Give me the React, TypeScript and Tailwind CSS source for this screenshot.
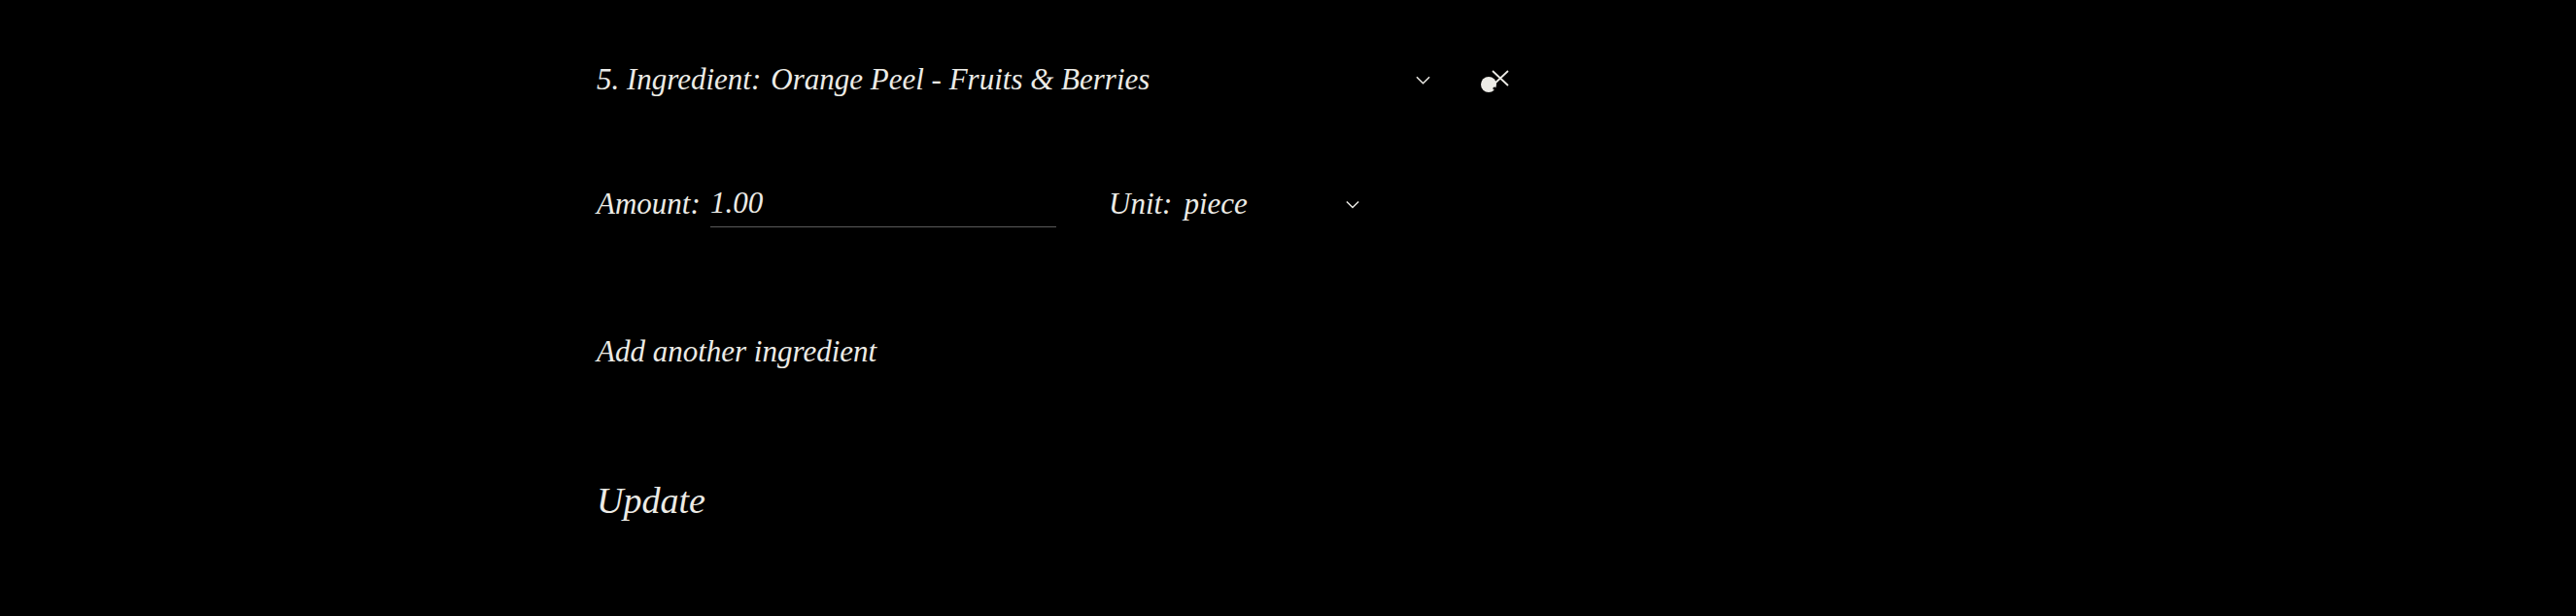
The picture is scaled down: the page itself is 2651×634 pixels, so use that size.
import React, { useState } from 'react';

const Chevron = ({ className }: { className?: string }) => (
  <svg className={className} viewBox="0 0 16 9" fill="none" stroke="currentColor" strokeWidth={1.6}>
    <polyline points="1,1 8,8 15,1" />
  </svg>
);

const RemoveIcon = () => (
  <svg className="h-[24px] w-[32px]" viewBox="0 0 32 24" fill="none">
    <circle cx="9" cy="16" r="8" fill="currentColor" />
    <circle cx="15" cy="20" r="1.6" fill="#000" />
    <path d="M13 2 L29 17 M29 2 L13 17" stroke="currentColor" strokeWidth={1.8} />
  </svg>
);

export default function App() {
  const [amount, setAmount] = useState('1.00');

  return (
    <div className="min-h-[634px] w-full bg-black pl-[614px] pt-[58px] font-['Liberation_Serif',serif] italic text-[#ecebe6]">
      <div className="flex items-center">
        <div className="flex w-[858px] items-center justify-between text-[31px] leading-[48px]">
          <div className="flex gap-[10px]">
            <span>5. Ingredient:</span>
            <span>Orange Peel - Fruits &amp; Berries</span>
          </div>
          <Chevron className="h-[9px] w-[15px]" />
        </div>
        <button className="ml-[51px] mt-[2px]">
          <RemoveIcon />
        </button>
      </div>

      <div className="mt-[79px] flex items-end text-[31px] leading-[48px]">
        <span className="w-[117px]">Amount:</span>
        <input
          value={amount}
          onChange={(e) => setAmount(e.target.value)}
          className="w-[356px] border-b border-[#5a5a5a] bg-transparent italic outline-none"
        />
        <div className="ml-[54px] flex w-[258px] items-center justify-between">
          <div className="flex gap-[12px]">
            <span>Unit:</span>
            <span>piece</span>
          </div>
          <Chevron className="h-[9px] w-[14px]" />
        </div>
      </div>

      <div className="mt-[104px] text-[31px] leading-[48px]">
        <button className="italic">Add another ingredient</button>
      </div>

      <div className="mt-[101px] text-[38px] leading-[56px]">
        <button className="italic">Update</button>
      </div>
    </div>
  );
}
